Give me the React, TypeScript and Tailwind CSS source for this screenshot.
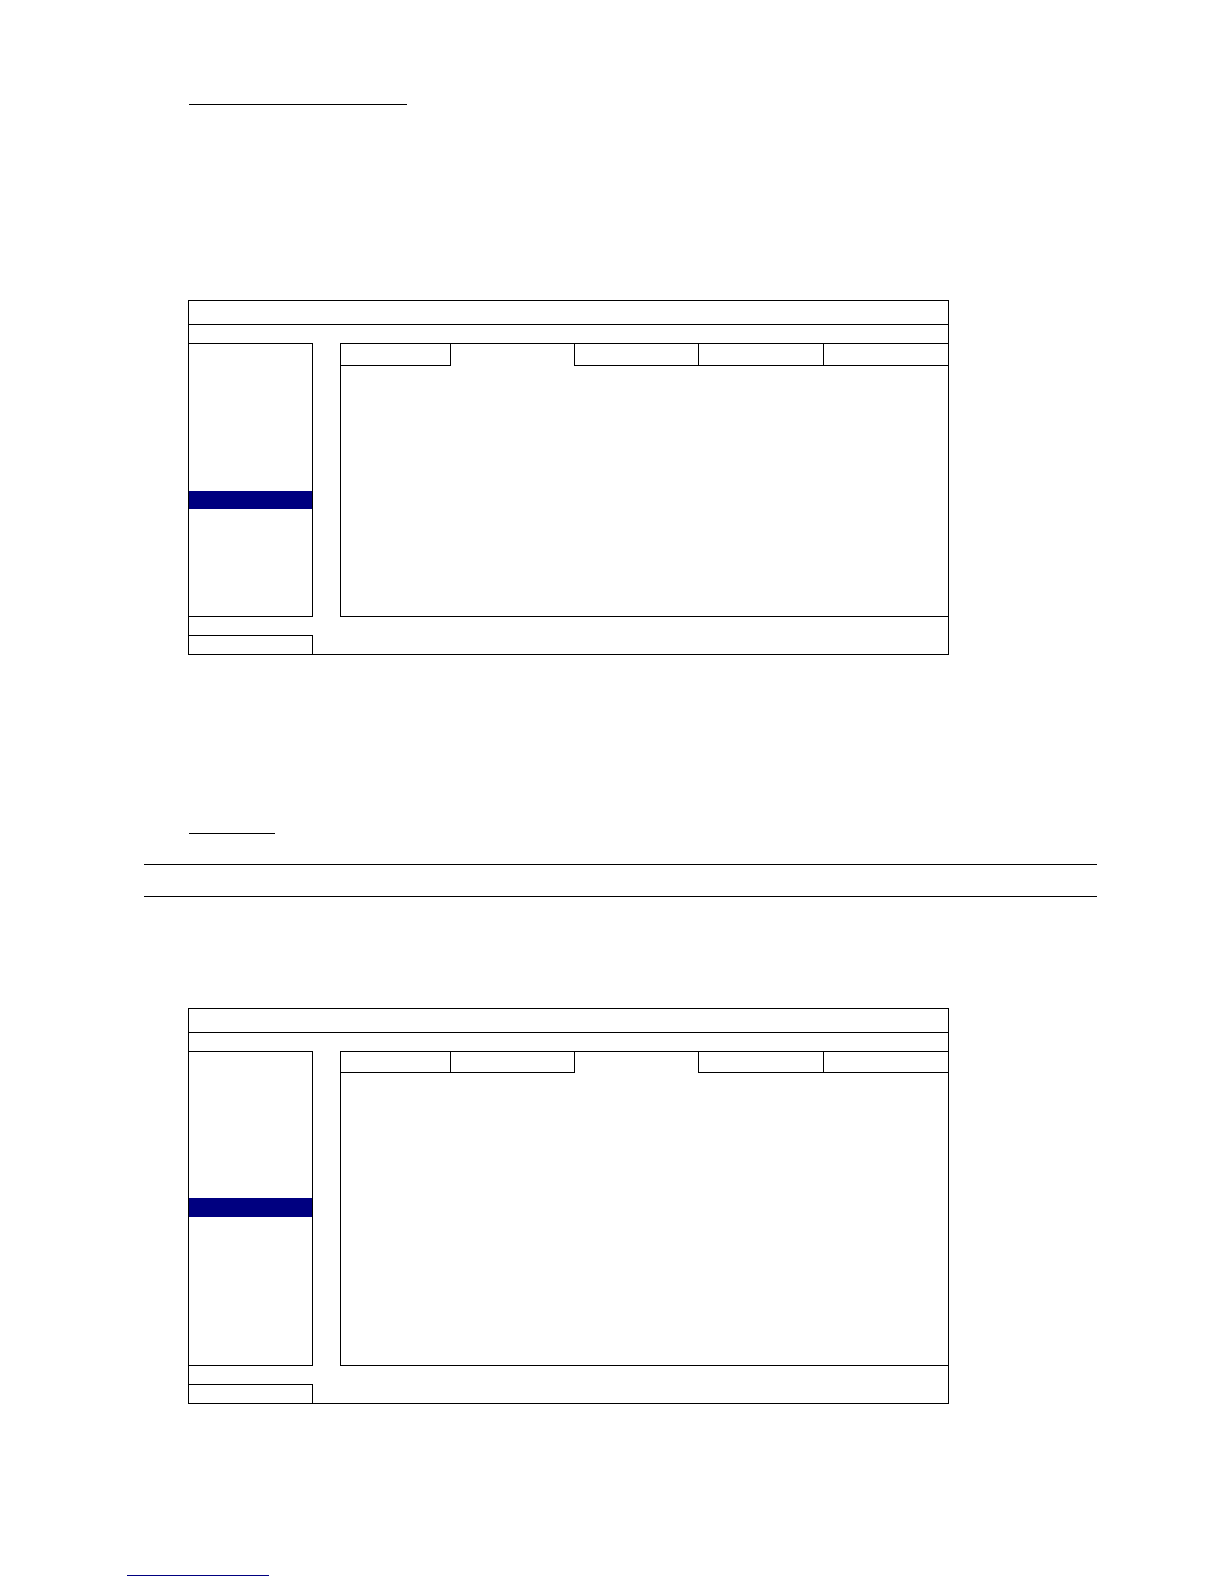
import React from "react";
import clsx from "clsx";

type PanelProps = {
  activeTab: number;
  bodyClass: string;
  tabsClass: string;
  beforeClass: string;
  selectedClass: string;
};

const tabs = [0, 1, 2, 3, 4];

function Panel({
  activeTab,
  bodyClass,
  tabsClass,
  beforeClass,
  selectedClass,
}: PanelProps) {
  return (
    <section className="ml-[61px] max-w-[761px] border border-black">
      <header className="h-6 border-b border-black" />
      <div className="h-[18px]" />

      <div className={clsx("flex gap-[27px]", bodyClass)}>
        <aside className="w-[124px] shrink-0 border-y border-r border-black">
          <div className={beforeClass} />
          <div className={clsx("bg-[#000080]", selectedClass)} />
        </aside>
        <div className="flex-1 border-y border-l border-black">
          <div
            className={clsx(
              "grid grid-cols-[110fr_124fr_124fr_125fr_124fr]",
              tabsClass
            )}
          >
            {tabs.map((tab) => (
              <button
                key={tab}
                type="button"
                aria-label={`Tab ${tab + 1}`}
                className={clsx(
                  "border-black",
                  tab !== activeTab && "border-b",
                  tab !== tabs.length - 1 && "border-r"
                )}
              />
            ))}
          </div>
        </div>
      </div>

      <div className="h-[18px]" />
      <div className="h-[19px] w-[124px] border-t border-r border-black" />
    </section>
  );
}

export default function App() {
  return (
    <main className="bg-white px-[127px] pt-[104px] pb-2">
      <div className="ml-[62px] w-[218px] border-t border-black" />

      <div className="mt-[195px]">
        <Panel
          activeTab={1}
          bodyClass="h-[274px]"
          tabsClass="h-[22px]"
          beforeClass="h-[147px]"
          selectedClass="h-[18px]"
        />
      </div>

      <div className="mt-[178px] ml-[62px] w-[86px] border-t border-black" />
      <div className="mt-[30px] ml-[17px] h-[33px] border-y border-black" />

      <div className="mt-[111px]">
        <Panel
          activeTab={2}
          bodyClass="h-[315px]"
          tabsClass="h-[21px]"
          beforeClass="h-[146px]"
          selectedClass="h-[19px]"
        />
      </div>

      <footer className="mt-[171px] w-[142px] border-t border-[#000080]" />
    </main>
  );
}
